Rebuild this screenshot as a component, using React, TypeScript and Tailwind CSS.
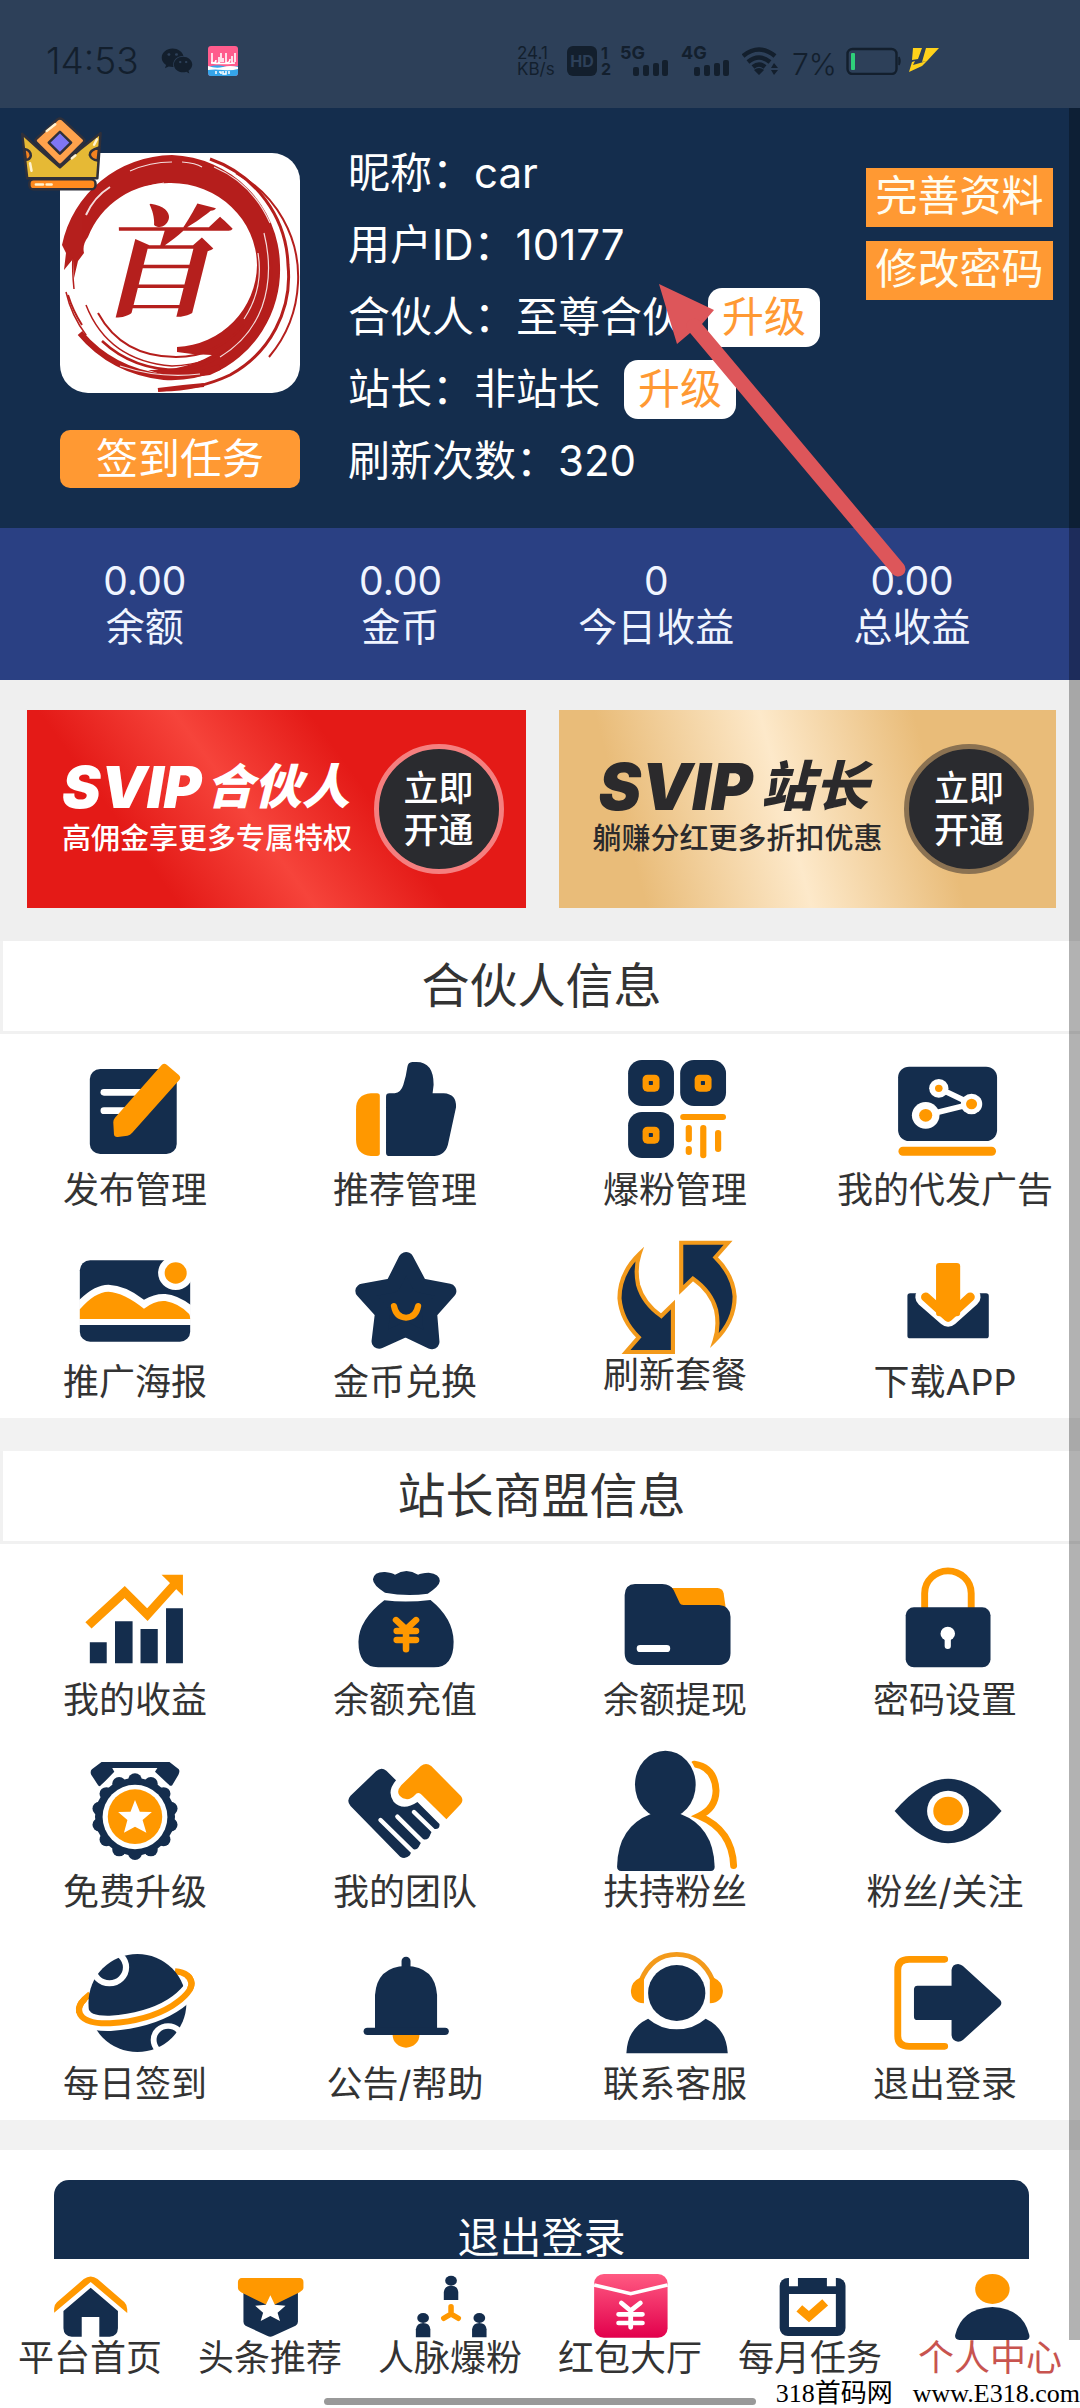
import React from "react";
import { FaWeixin } from "react-icons/fa";

const N = "#142d4d";
const O = "#ff9800";

type Drawing = { label: string; box: string; art: React.ReactNode; short?: boolean };

const LEFT = "218";
const RIGHT = "1002";

const partner: Drawing[] = [
  {
    label: "发布管理",
    box: `${LEFT} 366 348 360`,
    art: (
      <>
        <rect x="261" y="417" width="252" height="255" rx="30" fill={N} />
        <rect x="292" y="477" width="130" height="20" rx="10" fill="#fff" />
        <rect x="292" y="532" width="90" height="20" rx="10" fill="#fff" />
        <path d="M470 404q7-6 14 0L519 435q7 7 2 14L384 608q-6 7-14 9l-28 4q-10 1-11-8l-2-36q0-8 5-14z" fill={O} />
      </>
    ),
  },
  {
    label: "推荐管理",
    box: `${RIGHT} 366 348 360`,
    art: (
      <>
        <path d="M1103 498v172q0 8-8 8h-18q-43-4-43-48v-92q0-44 43-48h18q8 0 8 8z" fill={O} />
        <path d="M1131 490h15q18-2 25-25 8-25 12-55 2-13 14-14h12q50 0 50 68l-3 26h32q38 2 36 42l-22 105q-6 38-40 41H1131q-10 0-10-10V500q0-10 10-10z" fill={N} />
      </>
    ),
  },
  {
    label: "爆粉管理",
    box: `${LEFT} 366 348 360`,
    art: (
      <>
        {[
          [256, 390],
          [407, 390],
          [256, 546],
        ].map(([x, y]) => (
          <g key={`${x}-${y}`}>
            <rect x={x} y={y} width="133" height="138" rx="40" fill={N} />
            <rect x={x + 42} y={y + 44} width="49" height="51" rx="14" fill={O} />
            <rect x={x + 60} y={y + 63} width="12" height="12" rx="2" fill={N} />
          </g>
        ))}
        <g fill={O}>
          <rect x="407" y="552" width="133" height="18" rx="9" />
          <rect x="423" y="585" width="18" height="52" rx="9" />
          <rect x="423" y="648" width="18" height="27" rx="9" />
          <rect x="465" y="585" width="18" height="100" rx="9" />
          <rect x="508" y="600" width="18" height="66" rx="9" />
        </g>
      </>
    ),
  },
  {
    label: "我的代发广告",
    box: `${RIGHT} 366 348 360`,
    art: (
      <>
        <rect x="1040" y="410" width="287" height="223" rx="32" fill={N} />
        <rect x="1041" y="650" width="283" height="27" rx="13" fill={O} />
        <path d="M1158 475L1253 522 1120 556" fill="none" stroke="#fff" strokeWidth="17" />
        <circle cx="1158" cy="475" r="28" fill="#fff" />
        <circle cx="1253" cy="522" r="31" fill="#fff" />
        <circle cx="1120" cy="556" r="40" fill="#fff" />
        <circle cx="1158" cy="475" r="11" fill={O} />
        <circle cx="1253" cy="522" r="16" fill={O} />
        <circle cx="1120" cy="556" r="19" fill={O} />
      </>
    ),
  },
  {
    label: "推广海报",
    box: `${LEFT} 942 348 360`,
    art: (
      <>
        <rect x="232" y="991" width="320" height="244" rx="30" fill={N} />
        <circle cx="510" cy="1029" r="51" fill="#fff" />
        <circle cx="510" cy="1029" r="32" fill={O} />
        <path d="M230 1110Q275 1064 315 1064 365 1066 418 1109 450 1090 480 1092 515 1095 554 1125V1185H230z" fill="#fff" />
        <path d="M232 1138Q275 1086 315 1085 360 1088 418 1136 450 1110 480 1113 520 1120 549 1152 552 1156 552 1167H232z" fill={O} />
      </>
    ),
  },
  {
    label: "金币兑换",
    box: `${RIGHT} 942 348 360`,
    art: (
      <>
        <path d="M1179 988L1219 1066 1303 1083 1247 1148 1254 1236 1178 1198 1101 1234 1111 1148 1054 1083 1141 1066z" fill={N} stroke={N} strokeWidth="44" strokeLinejoin="round" />
        <path d="M1144 1128Q1150 1162 1179 1163 1208 1162 1214 1128" fill="none" stroke={O} strokeWidth="18" strokeLinecap="round" />
      </>
    ),
  },
  {
    label: "刷新套餐",
    box: `${LEFT} 942 348 339`,
    short: true,
    art: (
      <g fill={N} stroke="#f39a1b" strokeWidth="12" strokeMiterlimit="8">
        <path d="M289 972Q231 1030 231 1105 236 1170 287 1222L250 1266H386V1124L352 1158Q300 1120 285 1065 275 1015 289 972z" />
        <path d="M289 972Q231 1030 231 1105 236 1170 287 1222L250 1266H386V1124L352 1158Q300 1120 285 1065 275 1015 289 972z" transform="rotate(180 398 1102)" />
      </g>
    ),
  },
  {
    label: "下载APP",
    box: `${RIGHT} 942 348 360`,
    art: (
      <>
        <rect x="1067" y="1090" width="236" height="135" rx="8" fill={N} />
        <path d="M1120 1101L1185 1160 1249 1101" fill="#fff" stroke="#fff" strokeWidth="60" strokeLinecap="round" strokeLinejoin="round" />
        <rect x="1100" y="1060" width="170" height="40" fill="#fff" />
        <rect x="1150" y="999" width="70" height="160" rx="10" fill={O} />
        <path d="M1120 1101L1185 1162 1249 1101" fill="none" stroke={O} strokeWidth="27" strokeLinecap="round" strokeLinejoin="round" />
      </>
    ),
  },
];

const alliance: Drawing[] = [
  {
    label: "我的收益",
    box: `${LEFT} 396 348 360`,
    art: (
      <>
        <path d="M261 637h49v63h-49zM334 574h51v126h-51zM408 597h50v103h-50zM482 535h49v165h-49z" fill={N} />
        <path d="M257 586L362 486 428 554 508 462" fill="none" stroke={O} strokeWidth="26" />
        <path d="M469 434h62v63z" fill={O} />
      </>
    ),
  },
  {
    label: "余额充值",
    box: `${RIGHT} 396 348 360`,
    art: (
      <>
        <path d="M1118 488Q1083 466 1083 448 1086 425 1118 426 1138 428 1147 434 1180 412 1214 434 1222 429 1245 428 1277 432 1277 453 1276 468 1242 491 1180 500 1118 488z" fill={N} />
        <path d="M1116 511Q1180 519 1250 510 1316 565 1317 635 1317 712 1260 712H1098Q1041 710 1041 635 1042 570 1116 511z" fill={N} />
        <path d="M1150 570L1179 598 1208 570M1152 603H1208M1152 630H1208M1179 600V658" fill="none" stroke={O} strokeWidth="19" strokeLinecap="round" />
      </>
    ),
  },
  {
    label: "余额提现",
    box: `${LEFT} 396 348 360`,
    art: (
      <>
        <path d="M380 474H515Q530 475 533 490L540 540H400z" fill={O} />
        <path d="M276 462H355Q380 463 388 480L406 520Q408 525 416 525H520Q552 528 553 560V670Q552 704 520 705H280Q247 704 246 670V495Q247 463 276 462z" fill={N} />
        <rect x="281" y="645" width="97" height="21" rx="10" fill="#fff" />
      </>
    ),
  },
  {
    label: "密码设置",
    box: `${RIGHT} 396 348 360`,
    art: (
      <>
        <path d="M1117 540V490A67 67 0 0 1 1252 490V540" fill="none" stroke={O} strokeWidth="20" />
        <rect x="1062" y="532" width="246" height="180" rx="24" fill={N} />
        <circle cx="1184" cy="611" r="21" fill="#fff" />
        <rect x="1175" y="616" width="18" height="41" rx="9" fill="#fff" />
      </>
    ),
  },
  {
    label: "免费升级",
    box: `${LEFT} 972 348 360`,
    art: (
      <>
        <path d="M295 996H492L519 1018Q523 1024 518 1034L500 1066Q494 1070 490 1064L450 1025 457 1014H326L332 1025 292 1068Q288 1070 284 1064L265 1034Q261 1024 267 1018z" fill={N} />
        <circle cx="392" cy="1162" r="138" fill="#fff" />
        <circle cx="392" cy="1160" r="116" fill={N} />
        {Array.from({ length: 14 }, (_, i) => {
          const a = (i * Math.PI) / 7;
          return <circle key={i} cx={392 + 106 * Math.sin(a)} cy={1160 - 110 * Math.cos(a)} r="20" fill={N} />;
        })}
        <ellipse cx="392" cy="1161" rx="94" ry="97" fill="#fff" />
        <ellipse cx="392" cy="1160" rx="79" ry="82" fill={O} />
        <path d="M392 1110L406 1145 441 1146 414 1170 425 1208 392 1190 360 1208 370 1170 343 1146 379 1145z" fill="#fff" />
      </>
    ),
  },
  {
    label: "我的团队",
    box: `${RIGHT} 972 348 360`,
    art: (
      <>
        <path d="M1092 1024Q1107 1010 1122 1022L1150 1051Q1122 1085 1143 1115 1170 1145 1212 1116L1276 1182Q1278 1200 1258 1196L1250 1212Q1245 1232 1228 1228L1219 1244Q1212 1262 1198 1258L1190 1276Q1176 1290 1162 1280L1018 1128Q1005 1112 1018 1097z" fill={N} />
        <path d="M1105 1170L1202 1268M1154 1160L1234 1242M1202 1146L1264 1208" fill="none" stroke="#fff" strokeWidth="13" strokeLinecap="round" />
        <path d="M1222 1008Q1237 996 1252 1008L1338 1098Q1347 1110 1338 1122L1296 1168 1222 1092Q1212 1085 1205 1095 1190 1113 1170 1105 1145 1090 1165 1066z" fill={O} />
      </>
    ),
  },
  {
    label: "扶持粉丝",
    box: `${LEFT} 972 348 360`,
    art: (
      <>
        <path d="M448 1002Q508 1012 511 1082 510 1135 462 1158 558 1200 562 1307" fill="none" stroke={O} strokeWidth="20" strokeLinecap="round" />
        <ellipse cx="364" cy="1062" rx="96" ry="108" fill="#fff" />
        <ellipse cx="364" cy="1064" rx="88" ry="102" fill={N} />
        <path d="M236 1323Q224 1322 224 1310 226 1190 322 1152H408Q504 1190 507 1310 507 1322 496 1323z" fill={N} />
      </>
    ),
  },
  {
    label: "粉丝/关注",
    box: `${RIGHT} 972 348 360`,
    art: (
      <>
        <path d="M1030 1143Q1110 1046 1185 1046 1260 1046 1340 1143 1260 1240 1185 1240 1110 1240 1030 1143z" fill={N} />
        <circle cx="1185" cy="1143" r="61" fill="#fff" />
        <circle cx="1185" cy="1143" r="43" fill={O} />
      </>
    ),
  },
  {
    label: "每日签到",
    box: `${LEFT} 78 348 360`,
    art: (
      <>
        <path d="M262 222Q226 250 230 275 240 312 320 310 430 302 500 257 556 220 556 190 552 158 508 154" fill="none" stroke={O} strokeWidth="18" />
        <ellipse cx="399" cy="249" rx="142" ry="147" fill={N} />
        <path d="M238 276Q245 312 320 310 430 302 500 257 530 238 552 210" fill="none" stroke="#fff" strokeWidth="46" />
        <path d="M246 238Q226 256 230 275 240 312 320 310 430 302 500 257 556 220 556 190 555 175 543 166" fill="none" stroke={O} strokeWidth="18" />
        <circle cx="318" cy="142" r="48" fill="none" stroke="#fff" strokeWidth="18" />
        <circle cx="488" cy="360" r="42" fill="none" stroke="#fff" strokeWidth="17" />
      </>
    ),
  },
  {
    label: "公告/帮助",
    box: `${RIGHT} 78 348 360`,
    art: (
      <>
        <circle cx="1179" cy="344" r="39" fill={O} />
        <rect x="1166" y="110" width="26" height="60" rx="13" fill={N} />
        <path d="M1089 330V225Q1095 140 1179 138 1263 140 1269 225V330z" fill={N} />
        <rect x="1056" y="323" width="247" height="22" rx="11" fill={N} />
      </>
    ),
  },
  {
    label: "联系客服",
    box: `${LEFT} 78 348 360`,
    art: (
      <>
        <ellipse cx="397" cy="219" rx="83" ry="84" fill={N} />
        <path d="M251 400Q254 325 314 296 350 328 397 328 445 328 481 296 541 325 545 400z" fill={N} />
        <path d="M293 182Q325 103 397 103 470 103 502 182" fill="none" stroke="#f39a1b" strokeWidth="14" />
        <path d="M302 170V250Q264 246 264 212 266 185 288 175zM493 170V250Q531 246 531 212 529 185 507 175z" fill={O} />
      </>
    ),
  },
  {
    label: "退出登录",
    box: `${RIGHT} 78 348 360`,
    art: (
      <>
        <path d="M1175 118H1072Q1039 118 1039 150V348Q1039 379 1072 379H1175" fill="none" stroke={O} strokeWidth="20" strokeLinecap="round" />
        <path d="M1096 197H1195V150Q1197 132 1214 132 1222 133 1228 138L1336 240Q1343 249 1336 258L1228 360Q1222 365 1214 365 1197 364 1195 346V300H1096Q1086 300 1086 290V207Q1087 197 1096 197z" fill={N} />
      </>
    ),
  },
];

const tabs: Drawing[] = [
  {
    label: "平台首页",
    box: "145 1053 232 207",
    art: (
      <>
        <path d="M157 1178V1165Q157 1155 165 1147L243 1077Q263 1062 283 1077L361 1147Q369 1155 369 1168V1179L263 1086z" fill={O} />
        <path d="M184 1173L263 1103 342 1173V1225Q341 1250 318 1250H288V1191H237V1250H208Q185 1250 184 1225z" fill={N} />
      </>
    ),
  },
  {
    label: "头条推荐",
    box: "668 1053 232 207",
    art: (
      <>
        <path d="M707 1110H865V1205Q865 1213 858 1217L793 1248Q785 1252 777 1248L713 1217Q707 1213 707 1205z" fill={N} />
        <path d="M702 1074H870Q881 1075 881 1086V1105Q880 1112 870 1117L795 1155Q785 1160 775 1155L700 1117Q691 1112 691 1105V1086Q692 1075 702 1074z" fill={O} />
        <path d="M785 1126L798 1154 829 1157 806 1178 813 1203 785 1188 757 1203 764 1178 741 1157 772 1154z" fill="#fff" />
      </>
    ),
  },
  {
    label: "人脉爆粉",
    box: "1191 1053 232 207",
    art: (
      <>
        {[
          [1310, 1082],
          [1229, 1194],
          [1392, 1194],
        ].map(([x, y]) => (
          <g key={x} fill={N} transform={`translate(${x} ${y})`}>
            <ellipse rx="17" ry="15" />
            <path d="M-21 58V34Q-18 15 0 15 19 15 21 34V58z" />
          </g>
        ))}
        <path d="M1310 1160V1182L1289 1195M1310 1182L1331 1195" fill="none" stroke={O} strokeWidth="16" strokeLinecap="round" />
      </>
    ),
  },
  {
    label: "红包大厅",
    box: "145 1053 232 207",
    art: (
      <>
        <defs>
          <linearGradient id="packet" x1="0" y1="0" x2="0" y2="1">
            <stop offset="0" stopColor="#ff5a82" />
            <stop offset="1" stopColor="#e2004c" />
          </linearGradient>
        </defs>
        <rect x="157" y="1062" width="213" height="191" rx="28" fill="url(#packet)" />
        <path d="M157 1095L263 1121 370 1095" fill="none" stroke="#fff" strokeWidth="11" />
        <path d="M236 1149L263 1172 291 1149M228 1183H297M228 1209H297M263 1172V1222" fill="none" stroke="#fff" strokeWidth="14" strokeLinecap="round" />
      </>
    ),
  },
  {
    label: "每月任务",
    box: "668 1053 232 207",
    art: (
      <>
        <rect x="696" y="1074" width="191" height="174" rx="24" fill={N} />
        <path d="M723 1070h26v29h-26zM833 1070h26v29h-26zM723 1122h136v99h-136z" fill="#fff" />
        <path d="M753 1165L781 1190 828 1147" fill="none" stroke={O} strokeWidth="25" />
      </>
    ),
  },
  {
    label: "个人中心",
    box: "1191 1053 232 207",
    art: (
      <>
        <ellipse cx="1314" cy="1107" rx="50" ry="45" fill={O} />
        <path d="M1218 1260Q1204 1258 1206 1245 1225 1165 1314 1161 1403 1165 1421 1245 1423 1258 1412 1260z" fill={N} />
      </>
    ),
  },
];

function StatusBar() {
  return (
    <div className="flex h-[108px] shrink-0 items-center bg-[#2d4059] pt-3.5 pl-[46px] text-[#131f2d]">
      <div className="flex w-[471px] items-center">
        <span className="w-[115px] text-[37px] leading-10 font-light">14:53</span>
        <FaWeixin className="mr-[15px] size-[32px]" />
        <svg className="size-[30px]" viewBox="0 0 30 30" aria-hidden="true">
          <rect width="30" height="30" rx="3" fill="#ff5c8d" />
          <path d="M0 21q8-3 15-1t15 0v7q0 3-3 3H3q-3 0-3-3z" fill="#35a5ea" />
          <path d="M0 20q8 3 15 1t15 0v2q-7 2-15 1t-15 0z" fill="#fff" />
          <path d="M4 7v10q4 0 4-3M11 11v6M13 7v9M15 12v4M18 7v10q4 0 4-4M24 10v7M27 7v9M3 17q10 1 24 0" fill="none" stroke="#fff" strokeWidth="1.6" />
          <path d="M8 25v3M11 26h2v2M15 25v3h3v-3M21 25v3" fill="none" stroke="#fff" strokeWidth="1.5" />
        </svg>
      </div>
      <div className="w-[50px] text-[17px] leading-4">
        <div>24.1</div>
        <div>KB/s</div>
      </div>
      <span className="flex size-[30px] items-center justify-center rounded-md bg-[#131f2d] text-base leading-5 font-bold text-[#2d4059]">HD</span>
      <div className="ml-1 w-[19px] text-base leading-4 font-bold">
        <div>1</div>
        <div>2</div>
      </div>
      <Signal name="5G" />
      <Signal name="4G" />
      <svg className="h-[28px] w-[36px]" viewBox="0 0 36 28" aria-hidden="true">
        <g fill="none" stroke="#131f2d" strokeWidth="4.5">
          <path d="M1 9Q17-4 33 9" />
          <path d="M6 15Q17 6 28 15" />
          <path d="M11 20Q17 15 23 20" />
        </g>
        <path d="M12 23q5-4 10 0l-5 5zM29 21l3-5 4 5zM29 23h7l-4 5z" fill="#131f2d" />
      </svg>
      <span className="w-[68px] pt-1.5 pl-3.5 text-[30px] leading-8 font-light">7%</span>
      <svg className="h-[28px] w-[94px]" viewBox="0 0 94 28" aria-hidden="true">
        <rect x="1.5" y="2" width="49" height="25" rx="5" fill="none" stroke="#131f2d" strokeWidth="2.4" />
        <path d="M53 10q2 4 0 8z" fill="#131f2d" stroke="#131f2d" strokeWidth="1.5" />
        <rect x="5" y="6" width="4" height="17" rx="1" fill="#2fd07a" />
        <path d="M67 1h9l-4 11-6 1zM80 1h13L81 14l-5 1zM63 25l3-10 3-1-2 4 14-4-5 5z" fill="#ffd21a" />
      </svg>
    </div>
  );
}

function Signal({ name }: { name: string }) {
  return (
    <div className="h-[30px] w-[61px]">
      <div className="text-[18px] leading-3.5 font-bold">{name}</div>
      <svg className="ml-[13px] h-4 w-[36px]" viewBox="0 0 36 16" aria-hidden="true">
        <g fill="#131f2d">
          <rect x="0" y="7" width="6" height="9" rx="2" />
          <rect x="10" y="5" width="6" height="11" rx="2" />
          <rect x="20" y="3" width="6" height="13" rx="2" />
          <rect x="29" y="0" width="6" height="16" rx="2" />
        </g>
      </svg>
    </div>
  );
}

function Avatar() {
  const red = "#b51f1d";
  return (
    <div className="relative flex h-[240px] items-center justify-center overflow-hidden rounded-[28px] bg-white pr-12 pb-9">
      <svg className="absolute inset-0 size-full" viewBox="0 0 240 240" aria-hidden="true">
        <path
          d="M2 92A114 112 0 0 1 112 2 112 112 0 0 1 220 112 114 114 0 0 1 150 222Q118 228 88 217 124 218 152 202 134 202 117 199V194A84 83 0 0 0 197 112 86 83 0 0 0 111 30 86 82 0 0 0 28 84Q22 92 24 100L18 108 14 125 13 106 4 117 6 100z"
          fill={red}
        />
        <g fill="none" stroke={red}>
          <path d="M150 6A116 116 0 0 1 228 112 112 112 0 0 1 170 222Q136 238 98 237" strokeWidth="3" />
          <path d="M176 20A118 118 0 0 1 238 130Q236 172 209 204" strokeWidth="2" />
          <path d="M6 139A112 112 0 0 0 112 226" strokeWidth="1.5" strokeDasharray="48 200" />
          <path d="M20 180Q52 218 104 224 130 226 160 214" strokeWidth="6" />
          <path d="M26 152Q48 208 112 213 150 212 176 190" strokeWidth="1.5" />
          <path d="M42 188Q74 218 122 217 160 212 190 176" strokeWidth="2.5" />
          <path d="M38 160Q62 204 116 204 156 204 184 172" strokeWidth="2" />
          <path d="M13 104Q12 116 14 136" strokeWidth="1.5" />
          <path d="M98 237Q120 234 144 232" strokeWidth="4" />
          <path d="M8 142Q13 158 22 172" strokeWidth="2" />
        </g>
        <g fill="none" stroke="#fff" strokeWidth="1.2" opacity=".85">
          <path d="M26 62Q34 44 50 34" strokeWidth="2" />
          <path d="M62 45Q78 34 104 30" />
          <path d="M70 18Q90 9 112 9M122 9Q136 10 142 14" />
          <path d="M154 14Q192 30 210 70" />
          <path d="M204 80Q214 120 202 154 190 186 160 204" />
          <path d="M198 100Q204 136 184 166" />
          <path d="M60 213Q100 226 140 221" />
        </g>
      </svg>
      <span className="relative font-['Noto_Serif_CJK_SC','Noto_Sans_CJK_SC',serif] text-[122px] leading-none font-bold text-[#b51f1d] italic">首</span>
    </div>
  );
}

function Crown() {
  return (
    <svg className="absolute top-2 left-5 h-[76px] w-[82px]" viewBox="64 340 228 222" preserveAspectRatio="none" aria-hidden="true">
      <g stroke="#30303a" strokeWidth="7" strokeLinejoin="round">
        <path d="M70 392L120 440 175 490 230 438 288 390 279 522H84z" fill="#e6b935" />
        <path d="M76 436Q94 440 94 456 92 468 80 468zM284 432Q257 440 258 454 262 468 280 470z" fill="#f58220" />
        <path d="M168 350Q175 344 182 350L240 406Q246 412 240 418L182 478Q175 486 168 478L110 418Q104 412 110 406z" fill="#ffa24c" />
        <path d="M175 386L206 418 175 450 144 418z" fill="#7f76f3" />
        <rect x="90" y="525" width="184" height="29" rx="12" fill="#ff8a1f" />
      </g>
      <path d="M138 384L162 364M92 478l4 22M270 424l8-16M108 540h20M138 540h14M208 464l10-9" stroke="#fff3d0" strokeWidth="7" strokeLinecap="round" />
    </svg>
  );
}

function Profile() {
  const upgrade = "ml-6 h-[59px] rounded-[14px] bg-white px-[14px] text-[#ff9933]";
  const action = "block h-[59px] w-[187px] bg-[#ff9933] text-center leading-[56px] text-[#fffdf0]";
  const row = "flex h-[72px] items-center whitespace-nowrap";
  return (
    <section className="relative flex items-start bg-[#142d4d] pb-[31px] text-[42px] leading-[56px] text-white">
      <div className="ml-[60px] w-[240px] pt-[45px]">
        <Avatar />
        <button className="mt-[37px] h-[58px] w-full rounded-[10px] bg-[#ff9933]">签到任务</button>
      </div>
      <Crown />
      <div className="ml-[48px] pt-[29px]">
        <div className={row}>昵称：car</div>
        <div className={row}>用户ID：10177</div>
        <div className={row}>
          合伙人：至尊合伙<button className={upgrade}>升级</button>
        </div>
        <div className={row}>
          站长：非站长<button className={upgrade}>升级</button>
        </div>
        <div className={row}>刷新次数：320</div>
      </div>
      <div className="mr-[27px] ml-auto flex flex-col gap-3.5 pt-[60px]">
        <a href="#profile" className={action}>完善资料</a>
        <a href="#password" className={action}>修改密码</a>
      </div>
      <svg className="pointer-events-none absolute top-[170px] left-[650px] z-10 h-[300px] w-[260px]" viewBox="650 278 260 300" aria-hidden="true">
        <path d="M659 284L714 310 702 324 690 333 677 344z" fill="#dd565a" />
        <path d="M694 326L898 569" stroke="#dd565a" strokeWidth="15" strokeLinecap="round" />
      </svg>
    </section>
  );
}

const stats = [
  ["余额", "0.00"],
  ["金币", "0.00"],
  ["今日收益", "0"],
  ["总收益", "0.00"],
];

function Banner({ tone, second, note }: { tone: "red" | "gold"; second: string; note: string }) {
  const red = tone === "red";
  return (
    <a
      href={red ? "#partner" : "#station"}
      className={
        red
          ? "flex h-[198px] flex-1 items-center bg-[linear-gradient(54deg,#e41a17_24%,#f6443b_45%,#e41a17_66%)] pr-[22px] pl-[35px] text-white"
          : "flex h-[198px] flex-1 items-center bg-[linear-gradient(75deg,#e9bc79_16%,#fde9ca_46%,#e9bc79_74%)] pr-[22px] pl-[34px] text-[#2b2a2c]"
      }
    >
      <span className="flex flex-1 flex-col gap-1 pb-1 whitespace-nowrap">
        <span className={red ? "flex items-center gap-1 leading-[60px] font-black italic" : "flex items-center gap-2 pl-1.5 leading-[60px] font-black italic"}>
          <span className={red ? "text-[58px]" : "text-[64px]"}>SVIP</span>
          <span className={red ? "text-[48px]" : "text-[54px]"}>{second}</span>
        </span>
        <span className="text-[29px] leading-9 font-medium">{note}</span>
      </span>
      <span
        className={
          red
            ? "flex size-[130px] shrink-0 items-center justify-center rounded-full border-[5px] border-[#f57f7f] bg-[#2a2b2f] text-center text-[35px] leading-[42px] font-medium text-white"
            : "flex size-[130px] shrink-0 items-center justify-center rounded-full border-[5px] border-[#8b7252] bg-[#2a2b2f] text-center text-[35px] leading-[42px] font-medium text-white"
        }
      >
        立即
        <br />
        开通
      </span>
    </a>
  );
}

function Panel({ title, items }: { title: string; items: Drawing[] }) {
  return (
    <section className="bg-white">
      <h2 className="h-[93px] border-b-[3px] border-l-[3px] border-[#f1f1f1] text-center text-[48px] leading-[90px] font-normal">{title}</h2>
      <div className="grid grid-cols-4">
        {items.map((it) => (
          <a key={it.label} href={`#${it.label}`} className="flex h-[192px] flex-col items-center pt-[18px] text-[36px] leading-9 whitespace-nowrap">
            <svg
              className={it.short ? "h-[113px] w-[120px] shrink-0 overflow-visible" : "size-[120px] shrink-0 overflow-visible"}
              viewBox={it.box}
              preserveAspectRatio="none"
              aria-hidden="true"
            >
              {it.art}
            </svg>
            {it.label}
          </a>
        ))}
      </div>
    </section>
  );
}

export default function App() {
  return (
    <div lang="zh-CN" className="relative flex h-screen flex-col overflow-hidden bg-white font-['Inter','Noto_Sans_CJK_SC',sans-serif] text-[#333]">
      <StatusBar />
      <main className="min-h-0 flex-1 overflow-y-auto [scrollbar-width:none]">
        <Profile />
        <dl className="grid h-[152px] grid-cols-4 bg-[#2a4083] pt-[30px] pr-[40px] pl-[17px] text-center text-[39px] leading-[46px] text-[#f0f5ff]">
          {stats.map(([name, value]) => (
            <div key={name} className="flex flex-col-reverse justify-end">
              <dt>{name}</dt>
              <dd>{value}</dd>
            </div>
          ))}
        </dl>
        <div className="flex gap-[33px] bg-[#efefef] pt-[30px] pr-6 pb-[33px] pl-[27px]">
          <Banner tone="red" second="合伙人" note="高佣金享更多专属特权" />
          <Banner tone="gold" second="站长" note="躺赚分红更多折扣优惠" />
        </div>
        <Panel title="合伙人信息" items={partner} />
        <div className="h-[33px] bg-[#f2f2f2]" />
        <Panel title="站长商盟信息" items={alliance} />
        <div className="h-[30px] bg-[#f2f2f2]" />
        <div className="bg-white py-[30px] pr-[51px] pl-[54px]">
          <button className="h-[116px] w-full rounded-[15px] bg-[#142d4d] text-[42px] leading-10 text-white">退出登录</button>
        </div>
      </main>
      <nav className="grid shrink-0 grid-cols-6 bg-white pt-3 pb-8">
        {tabs.map((t, i) => (
          <a
            key={t.label}
            href={`#${t.label}`}
            aria-current={i === 5 ? "page" : undefined}
            className={
              i === 5
                ? "flex flex-col items-center text-[36px] leading-9 whitespace-nowrap text-[#c8544f]"
                : "flex flex-col items-center text-[36px] leading-9 whitespace-nowrap"
            }
          >
            <svg className="h-[69px] w-[80px]" viewBox={t.box} preserveAspectRatio="none" aria-hidden="true">
              {t.art}
            </svg>
            {t.label}
          </a>
        ))}
      </nav>
      <div className="absolute bottom-[3px] left-[30%] h-[7px] w-[40%] rounded-full bg-[#999]" />
      <div className="absolute right-0 bottom-0 flex gap-5 font-['Liberation_Serif','Noto_Sans_CJK_SC',serif] text-[26px] leading-7 text-black">
        <span>318首码网</span>
        <span>www.E318.com</span>
      </div>
      <div className="absolute top-[108px] right-0 bottom-[68px] w-[11px] bg-black/30" />
    </div>
  );
}
